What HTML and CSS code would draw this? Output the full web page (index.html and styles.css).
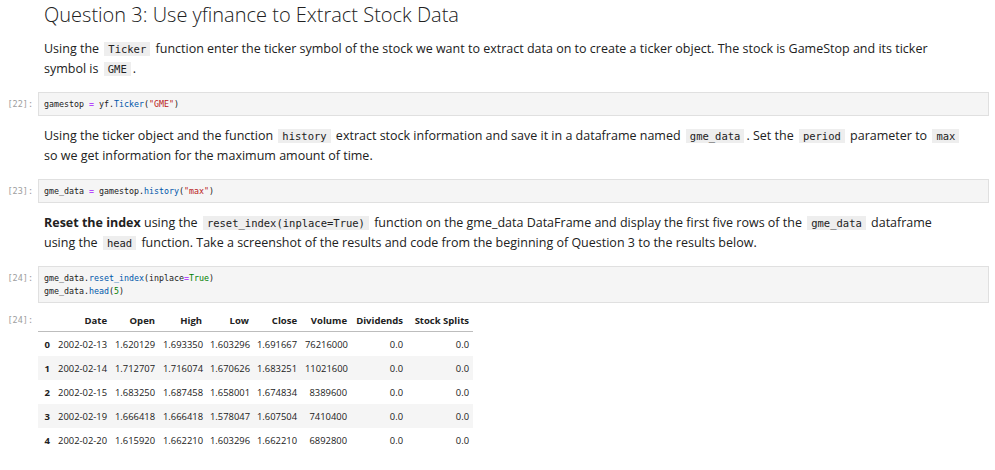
FILE: index.html
```html
<!DOCTYPE html>
<html>
<head>
<meta charset="utf-8">
<link rel="stylesheet" href="styles.css">
</head>
<body>
<div class="nb">
  <div class="cell md first">
    <div class="prompt"></div>
    <div class="content">
      <h2 class="title">Question 3: Use yfinance to Extract Stock Data</h2>
      <p>Using the <code>Ticker</code> function enter the ticker symbol of the stock we want to extract data on to create a ticker object. The stock is GameStop and its ticker symbol is <code>GME</code>.</p>
    </div>
  </div>

  <div class="cell code">
    <div class="prompt">[22]:</div>
    <div class="input"><pre>gamestop <span class="o">=</span> yf<span class="p">.</span><span class="f">Ticker</span>(<span class="s">"GME"</span>)</pre></div>
  </div>

  <div class="cell md">
    <div class="prompt"></div>
    <div class="content">
      <p>Using the ticker object and the function <code>history</code> extract stock information and save it in a dataframe named <code>gme_data</code>. Set the <code>period</code> parameter to <code>max</code> so we get information for the maximum amount of time.</p>
    </div>
  </div>

  <div class="cell code">
    <div class="prompt">[23]:</div>
    <div class="input"><pre>gme_data <span class="o">=</span> gamestop<span class="p">.</span><span class="f">history</span>(<span class="s">"max"</span>)</pre></div>
  </div>

  <div class="cell md">
    <div class="prompt"></div>
    <div class="content">
      <p><b>Reset the index</b> using the <code>reset_index(inplace=True)</code> function on the gme_data DataFrame and display the first five rows of the <code>gme_data</code> dataframe using the <code>head</code> function. Take a screenshot of the results and code from the beginning of Question 3 to the results below.</p>
    </div>
  </div>

  <div class="cell code">
    <div class="prompt">[24]:</div>
    <div class="input"><pre>gme_data<span class="p">.</span><span class="f">reset_index</span>(inplace<span class="o">=</span><span class="k">True</span>)
gme_data<span class="p">.</span><span class="f">head</span>(<span class="n">5</span>)</pre></div>
  </div>

  <div class="cell out">
    <div class="prompt">[24]:</div>
    <div class="output">
      <table class="df">
        <thead>
          <tr><th></th><th>Date</th><th>Open</th><th>High</th><th>Low</th><th>Close</th><th>Volume</th><th>Dividends</th><th>Stock Splits</th></tr>
        </thead>
        <tbody>
          <tr><th>0</th><td>2002-02-13</td><td>1.620129</td><td>1.693350</td><td>1.603296</td><td>1.691667</td><td>76216000</td><td>0.0</td><td>0.0</td></tr>
          <tr><th>1</th><td>2002-02-14</td><td>1.712707</td><td>1.716074</td><td>1.670626</td><td>1.683251</td><td>11021600</td><td>0.0</td><td>0.0</td></tr>
          <tr><th>2</th><td>2002-02-15</td><td>1.683250</td><td>1.687458</td><td>1.658001</td><td>1.674834</td><td>8389600</td><td>0.0</td><td>0.0</td></tr>
          <tr><th>3</th><td>2002-02-19</td><td>1.666418</td><td>1.666418</td><td>1.578047</td><td>1.607504</td><td>7410400</td><td>0.0</td><td>0.0</td></tr>
          <tr><th>4</th><td>2002-02-20</td><td>1.615920</td><td>1.662210</td><td>1.603296</td><td>1.662210</td><td>6892800</td><td>0.0</td><td>0.0</td></tr>
        </tbody>
      </table>
    </div>
  </div>
</div>
</body>
</html>
```

FILE: styles.css
```css
html, body {
  margin: 0;
  padding: 0;
  background: #ffffff;
}

body {
  font-family: "Open Sans", "Noto Sans", sans-serif;
  color: #212121;
}

.nb {
  display: flex;
  flex-direction: column;
  width: 989px;
}

.cell {
  display: flex;
  flex-direction: row;
}

.prompt {
  width: 33px;
  flex: 0 0 33px;
  padding-right: 5px;
  text-align: right;
  font-family: "DejaVu Sans Mono", monospace;
  font-size: 8.5px;
  color: #9e9e9e;
}

.content {
  flex: 1;
  padding: 0 25px 0 6px;
}

.title {
  margin: 0;
  padding-top: 3px;
  font-weight: 300;
  font-size: 20px;
  line-height: 24px;
  color: #212121;
}

p {
  margin: 0;
  font-size: 12.5px;
  line-height: 20px;
}

.md {
  margin-top: 10px;
}

.md.first {
  margin-top: 0;
}

.md.first p {
  margin-top: 12px;
}

code {
  font-family: "DejaVu Sans Mono", monospace;
  font-size: 10.5px;
  background: #eeeeee;
  padding: 1px 4px;
  margin: 0 2px;
}

.code {
  margin-top: 13px;
}

.code .prompt {
  line-height: 13px;
  padding-top: 6px;
}

.input {
  flex: 1;
  background: #f5f5f5;
  border: 1px solid #e0e0e0;
  padding: 5px 5px 4px;
}

pre {
  margin: 0;
  font-family: "DejaVu Sans Mono", monospace;
  font-size: 8.3px;
  line-height: 13px;
  color: #212121;
}

.o { color: #aa22ff; }
.f { color: #0055aa; }
.s { color: #ba2121; }
.k { color: #008000; }
.n { color: #008000; }
.p { color: #212121; }

.out {
  margin-top: 7px;
}

.out .prompt {
  line-height: 21px;
}

.output {
  flex: 1;
}

.df {
  border-collapse: collapse;
  table-layout: fixed;
  width: 435px;
  font-family: "Open Sans", sans-serif;
  font-size: 9.4px;
  color: #212121;
}

.df th, .df td {
  padding: 0 4px;
  height: 24px;
  text-align: right;
  white-space: nowrap;
}

.df thead th {
  font-weight: 700;
  font-size: 9.5px;
  border-bottom: 1px solid #bdbdbd;
  height: 21px;
}

.df tbody th {
  font-weight: 700;
  font-size: 9.5px;
}

.df tbody tr:nth-child(odd) {
  background: #ffffff;
}

.df tbody tr:nth-child(even) {
  background: #f5f5f5;
}

.df th:nth-child(1) { width: 8px; }
.df th:nth-child(2), .df td:nth-child(2) { width: 49px; }
.df th:nth-child(3), .df td:nth-child(3) { width: 40px; }
.df th:nth-child(4), .df td:nth-child(4) { width: 39px; }
.df th:nth-child(5), .df td:nth-child(5) { width: 39px; }
.df th:nth-child(6), .df td:nth-child(6) { width: 40px; }
.df th:nth-child(7), .df td:nth-child(7) { width: 42px; }
.df th:nth-child(8), .df td:nth-child(8) { width: 48px; }
.df th:nth-child(9), .df td:nth-child(9) { width: 58px; }
```
